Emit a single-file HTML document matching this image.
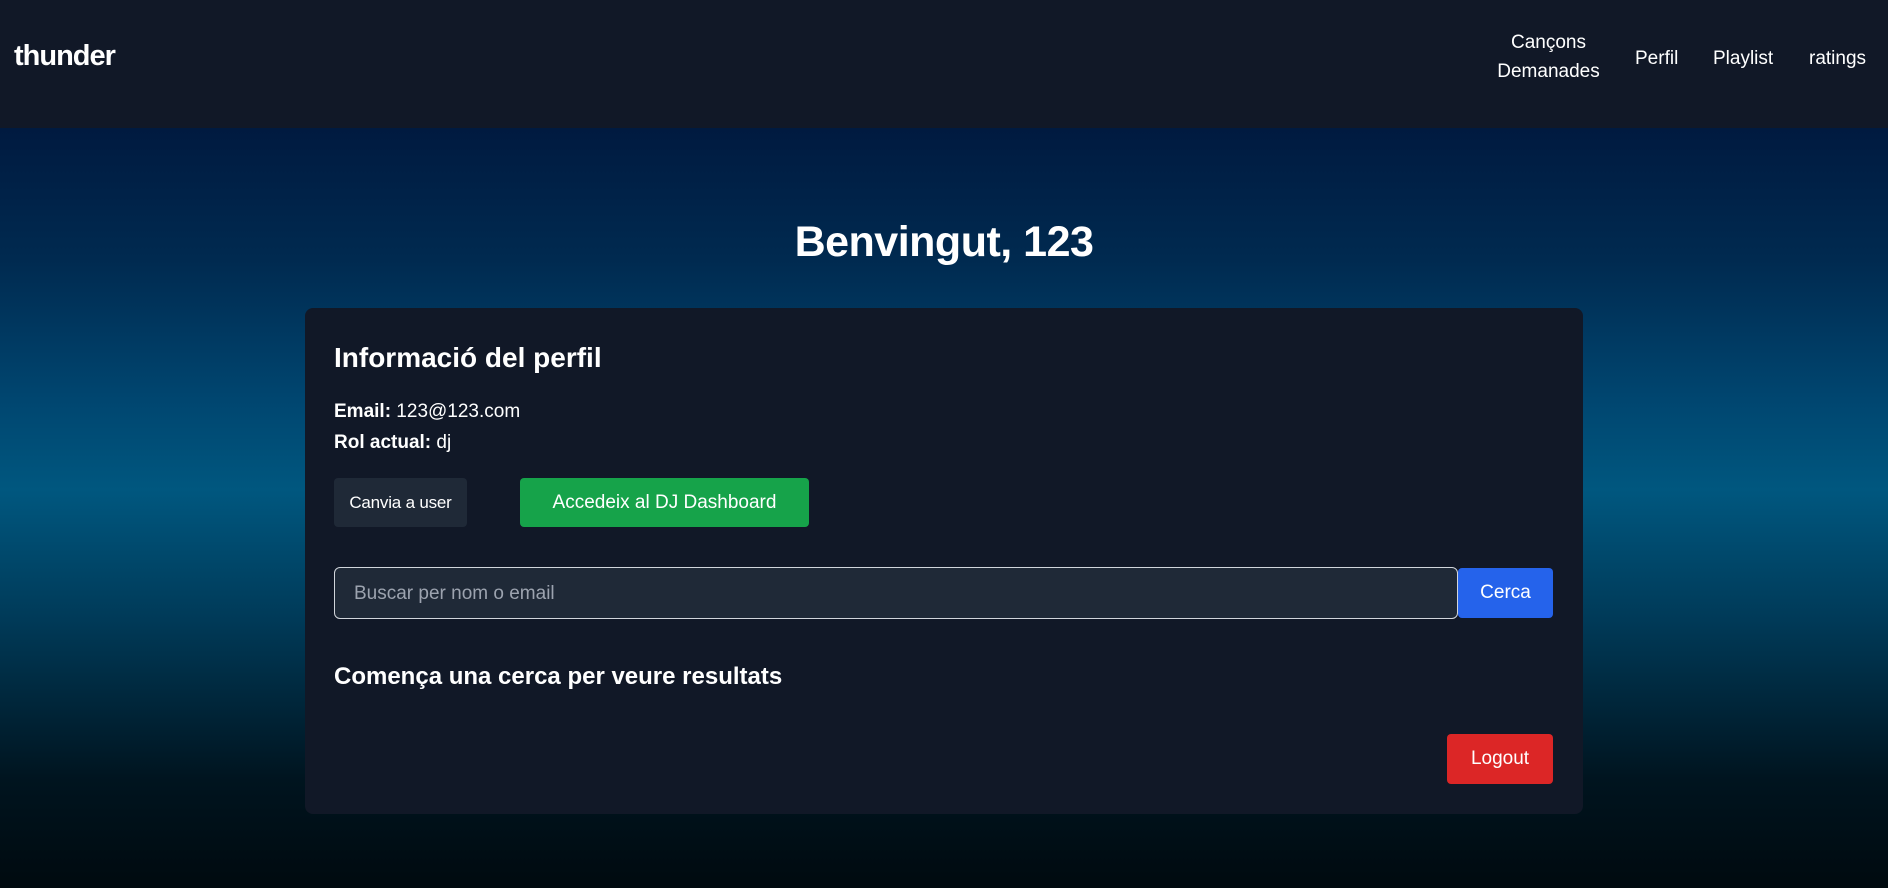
<!DOCTYPE html>
<html><head><meta charset="utf-8"><style>
*{box-sizing:border-box;margin:0;padding:0}
body{width:1888px;height:888px;overflow:hidden;font-family:"Liberation Sans",sans-serif;color:#fff;position:relative;
background:linear-gradient(to bottom,#111827 0,#111827 128px,#001a40 128px,#002a50 260px,#004670 400px,#00577f 490px,#003a58 620px,#00141f 780px,#000a0f 888px)}
.a{position:absolute;white-space:nowrap}
.nav{font-size:19px;line-height:29px}
.card{position:absolute;left:305px;top:308px;width:1278px;height:506px;background:#111827;border-radius:8px}
.btn{position:absolute;border-radius:4px;font-size:19px;display:flex;align-items:center;justify-content:center;white-space:nowrap}
</style></head><body>
<div class="a" style="left:14px;top:40px;font-size:29px;font-weight:900;letter-spacing:-1px">thunder</div>
<div class="a nav" style="left:1493px;top:28px;width:111px;text-align:center;white-space:normal;line-height:29px">Cançons Demanades</div>
<div class="a nav" style="left:1635px;top:44px">Perfil</div>
<div class="a nav" style="left:1713px;top:44px">Playlist</div>
<div class="a nav" style="left:1809px;top:44px">ratings</div>
<div class="a" style="left:0;width:1888px;text-align:center;top:218px;font-size:43px;font-weight:bold;letter-spacing:-0.5px">Benvingut, 123</div>
<div class="card"></div>
<div class="a" style="left:334px;top:342px;font-size:28px;font-weight:bold">Informació del perfil</div>
<div class="a" style="left:334px;top:401px;font-size:19px"><b>Email:</b> 123@123.com</div>
<div class="a" style="left:334px;top:432px;font-size:19px"><b>Rol actual:</b> dj</div>
<div class="btn" style="left:334px;top:478px;width:133px;height:49px;background:#1f2937;font-size:17px;letter-spacing:-0.2px">Canvia a user</div>
<div class="btn" style="left:520px;top:478px;width:289px;height:49px;background:#16a34a">Accedeix al DJ Dashboard</div>
<div class="a" style="left:334px;top:567px;width:1124px;height:52px;background:#1f2937;border:1px solid #d1d5db;border-radius:6px;font-size:19px;color:#9ca3af;padding:15px 19px">Buscar per nom o email</div>
<div class="btn" style="left:1458px;top:568px;width:95px;height:50px;background:#2563eb">Cerca</div>
<div class="a" style="left:334px;top:663px;font-size:24px;font-weight:bold">Comença una cerca per veure resultats</div>
<div class="btn" style="left:1447px;top:734px;width:106px;height:50px;background:#dc2626">Logout</div>
</body></html>
